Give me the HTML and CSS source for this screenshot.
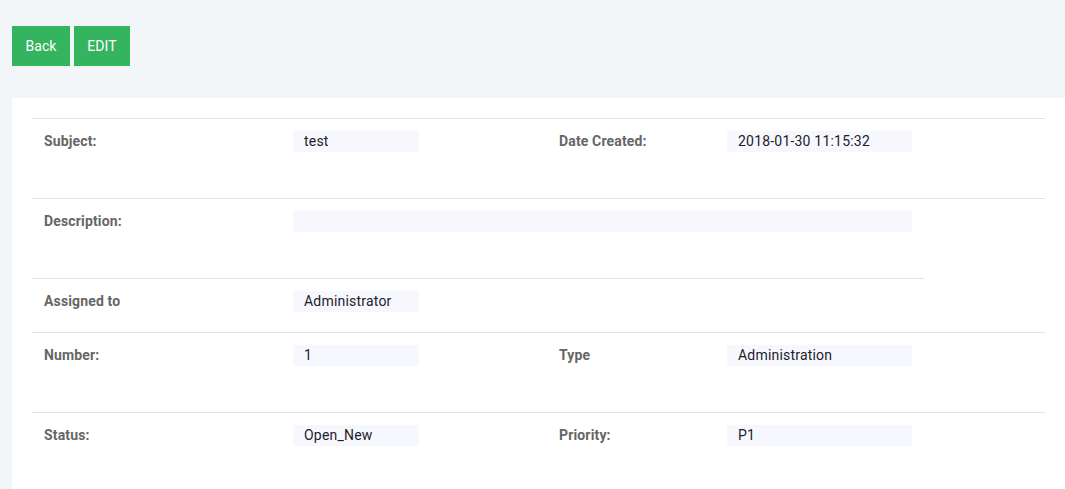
FILE: index.html
```html
<!DOCTYPE html>
<html>
<head>
<meta charset="utf-8">
<link rel="stylesheet" href="styles.css">
</head>
<body>
<div class="page">
  <div class="toolbar">
    <button class="btn btn-back">Back</button>
    <button class="btn btn-edit">EDIT</button>
  </div>
  <div class="card">
    <div class="row row-tall">
      <div class="label">Subject:</div>
      <div class="value"><span class="box box-short">test</span></div>
      <div class="label">Date Created:</div>
      <div class="value"><span class="box box-mid">2018-01-30 11:15:32</span></div>
    </div>
    <div class="row row-tall">
      <div class="label">Description:</div>
      <div class="value span3"><span class="box box-wide"></span></div>
    </div>
    <div class="row row-short row-narrow">
      <div class="label">Assigned to</div>
      <div class="value"><span class="box box-short">Administrator</span></div>
    </div>
    <div class="row row-tall">
      <div class="label">Number:</div>
      <div class="value"><span class="box box-short">1</span></div>
      <div class="label">Type</div>
      <div class="value"><span class="box box-mid">Administration</span></div>
    </div>
    <div class="row row-tall">
      <div class="label">Status:</div>
      <div class="value"><span class="box box-short">Open_New</span></div>
      <div class="label">Priority:</div>
      <div class="value"><span class="box box-mid">P1</span></div>
    </div>
  </div>
</div>
</body>
</html>
```

FILE: styles.css
```css
html, body {
  margin: 0;
  padding: 0;
  background: #f3f6f9;
  font-family: Roboto, "Liberation Sans", Arial, sans-serif;
  font-size: 14px;
}
.page {
  padding-left: 12px;
}
.toolbar {
  display: flex;
  gap: 4px;
  padding-top: 26px;
}
.btn {
  height: 40px;
  border: none;
  border-radius: 0;
  background: #35b45f;
  color: #ffffff;
  font-family: Roboto, "Liberation Sans", Arial, sans-serif;
  font-size: 14px;
  letter-spacing: 0.1px;
  padding: 0;
  cursor: pointer;
}
.btn-back { width: 58px; }
.btn-edit { width: 56px; }
.card {
  margin-top: 32px;
  background: #ffffff;
  padding: 20px 20px 0 20px;
}
.row {
  display: grid;
  grid-template-columns: 261px 254px 180px 185px 1fr;
  align-items: start;
  border-top: 1px solid #e1e1e8;
  padding-top: 12px;
  box-sizing: border-box;
}
.row-tall { height: 80px; }
.row-short { height: 54px; }
.row-narrow { width: 892px; }
.label {
  padding-left: 12px;
  line-height: 21px;
  font-weight: bold;
  color: #666666;
  letter-spacing: 0.15px;
}
.value {
  line-height: 21px;
}
.span3 { grid-column: 2 / span 3; }
.box {
  display: block;
  height: 21px;
  box-sizing: border-box;
  padding-left: 11px;
  background: #f7f8fd;
  color: #1c1c2a;
  white-space: nowrap;
  letter-spacing: 0.2px;
}
.box-short { width: 126px; }
.box-mid { width: 185px; }
.box-wide { width: 619px; }
```
